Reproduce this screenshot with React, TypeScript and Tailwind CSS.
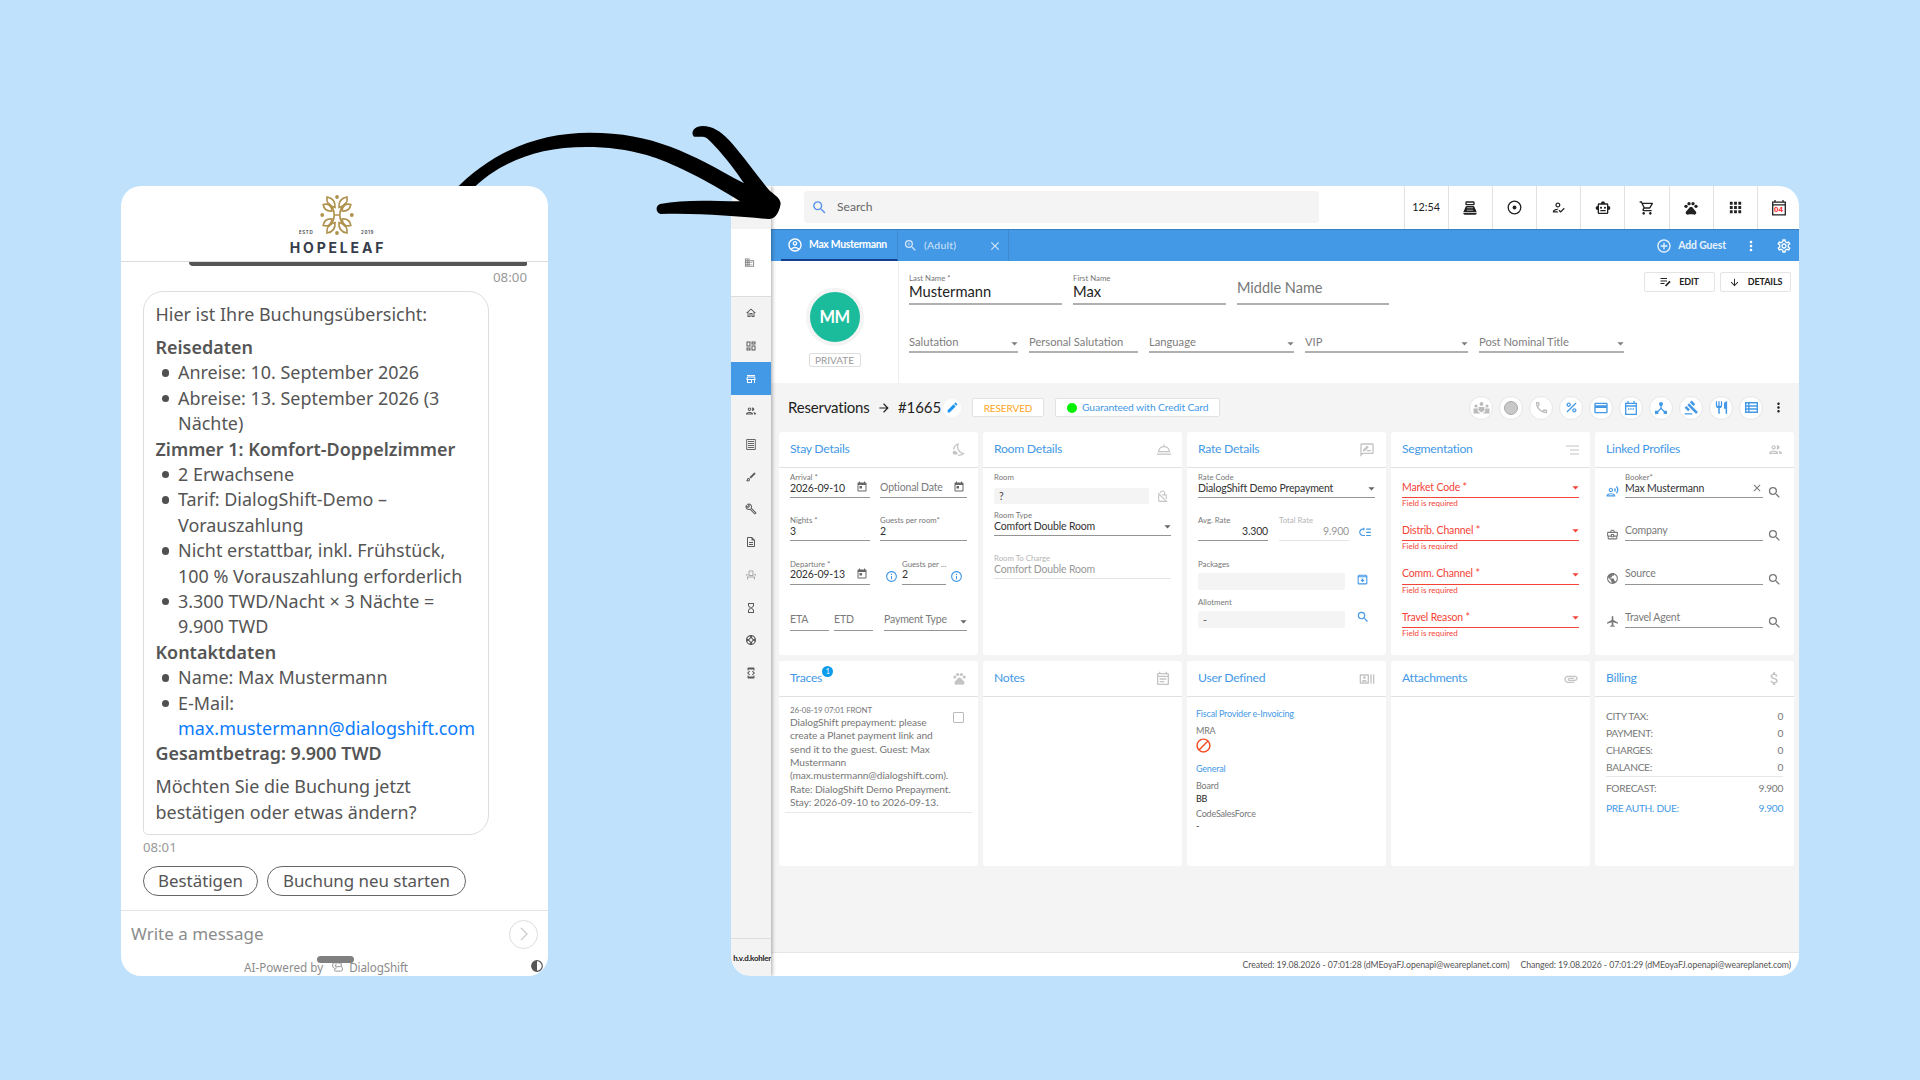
import type { ReactNode } from "react";
import type { IconType } from "react-icons";
import {
  MdAddCircleOutline,
  MdApps,
  MdArrowDownward,
  MdArrowDropDown,
  MdArrowForward,
  MdAttachMoney,
  MdAttachment,
  MdBlock,
  MdClose,
  MdDeviceHub,
  MdDomain,
  MdEdit,
  MdGavel,
  MdHourglassEmpty,
  MdLocalAirport,
  MdLowPriority,
  MdMoreVert,
  MdOutlineAccountCircle,
  MdOutlineArchive,
  MdOutlineBrush,
  MdOutlineBuild,
  MdOutlineBusinessCenter,
  MdOutlineCreditCard,
  MdOutlineDashboard,
  MdOutlineDescription,
  MdOutlineDeveloperMode,
  MdOutlineEventNote,
  MdOutlineEventSeat,
  MdOutlineHome,
  MdOutlineHowToReg,
  MdOutlineInfo,
  MdOutlineNightsStay,
  MdOutlineNoEncryption,
  MdOutlinePeople,
  MdOutlinePhone,
  MdOutlineRateReview,
  MdOutlineRecentActors,
  MdOutlineRecordVoiceOver,
  MdOutlineSettings,
  MdOutlineShoppingCart,
  MdOutlineSmartToy,
  MdOutlineStore,
  MdOutlineSupport,
  MdPercent,
  MdPets,
  MdPointOfSale,
  MdPublic,
  MdRestaurant,
  MdSearch,
  MdToday,
  MdZoomIn,
} from "react-icons/md";

/* ---------- small drawings ---------- */

function LeafLogo() {
  const quarter = (
    <g>
      <path d="M-2 -7.500C-8 -9 -11 -13 -10 -18C-4.500 -17 -1.500 -13 -2 -7.500Z" />
      <path d="M-5 -4C-10 -3.500 -13 -6 -13.800 -10.500C-9 -12 -5.500 -9.500 -5 -4Z" />
      <path d="M-2.800 0C-2.800 -5 -5 -9 -9 -12" />
    </g>
  );
  return (
    <svg width="34" height="40" viewBox="-17 -20 34 40" fill="none" stroke="#b0924f" strokeWidth="1.700">
      {quarter}
      <g transform="scale(-1 1)">{quarter}</g>
      <g transform="scale(1 -1)">{quarter}</g>
      <g transform="scale(-1 -1)">{quarter}</g>
      <path d="M-3 0H3" />
      <g fill="#b0924f" stroke="none">
        <circle cx="0" cy="-18" r="1.900" />
        <circle cx="0" cy="18" r="1.900" />
        <circle cx="-14.800" cy="0" r="1.900" />
        <circle cx="14.800" cy="0" r="1.900" />
      </g>
    </svg>
  );
}

function Arrow() {
  return (
    <svg className="absolute top-[110px] left-[440px] z-[15]" width="380" height="260" viewBox="0 0 1140 780">
      <path d="M40 244C150 128 290 68 450 68C640 68 750 130 912 220C880 170 830 110 800 84C790 77 775 82 763 80C752 74 756 48 788 48C850 50 880 105 985 238C1000 254 1020 262 1022 280C1020 300 1008 330 985 327C900 320 780 308 662 312C646 308 646 288 660 282C730 268 800 272 900 274C800 210 690 155 620 135C520 106 400 104 310 124C220 146 155 180 90 244Z" />
    </svg>
  );
}

function CalendarDay() {
  return (
    <div className="relative h-4 w-3.5">
      <svg width="14" height="16" viewBox="0 0 14 16" fill="none" stroke="#222" strokeWidth="1.300">
        <path d="M.7 2.200h12.600v12.600H.7zM.7 4.800h12.600M3 0v2.500M11 0v2.500" />
      </svg>
      <span className="absolute inset-x-0 top-[6px] text-center font-['Liberation_Sans'] text-[8px] leading-[8px] font-bold text-[#f22]">04</span>
    </div>
  );
}

function Target() {
  return (
    <svg width="15" height="15" viewBox="0 0 15 15">
      <circle cx="7.500" cy="7.500" r="6.300" fill="none" stroke="#222" strokeWidth="1.300" />
      <circle cx="7.500" cy="7.500" r="1.900" fill="#222" />
    </svg>
  );
}

function EditLines() {
  return (
    <svg width="11" height="10" viewBox="0 0 11 10" fill="none" stroke="#222">
      <path d="M.5 1.500h6.500M.5 4h6.500M.5 6.500h4" strokeWidth="1.200" />
      <path d="M5.500 9L10 4.300" strokeWidth="1.700" />
    </svg>
  );
}

function GroupPeople() {
  return (
    <svg width="17" height="12" viewBox="0 0 17 12" fill="#bbb">
      <circle cx="8.500" cy="2" r="1.900" />
      <circle cx="3" cy="4" r="1.600" />
      <circle cx="14" cy="4" r="1.600" />
      <path d="M5.500 5h6v3.500l-3 2-3-2zM.5 6.500h4.300v3l2.700 2H.5zM16.500 6.500h-4.300v3l-2.700 2h7z" />
    </svg>
  );
}

function SortLines() {
  return (
    <svg width="13" height="10" viewBox="0 0 13 10" stroke="#c4c4c4" strokeWidth="1.200">
      <path d="M0 1h13M4 5h9M4 9h9" />
    </svg>
  );
}

function RoomBell() {
  return (
    <svg width="14" height="11" viewBox="0 0 14 11" fill="none" stroke="#c4c4c4" strokeWidth="1.200">
      <path d="M0 10.200h14M1.500 7.700C2 4.500 4.300 2.700 7 2.700S12 4.500 12.500 7.700zM7 .5v2" />
    </svg>
  );
}

function CalendarRange() {
  return (
    <svg width="12" height="14" viewBox="0 0 12 14" fill="none" stroke="#4499e6" strokeWidth="1.300">
      <path d="M.7 2.300h10.600v11H.7zM.7 5h10.600M3 0v2M9 0v2" />
      <path d="M3 8h6" strokeDasharray="1.300 1" />
    </svg>
  );
}

function ViewRows() {
  return (
    <svg width="13" height="11" viewBox="0 0 13 11" fill="none" stroke="#4499e6" strokeWidth="1.400">
      <path d="M.7.7h11.600v9.600H.7zM.7 4h11.600M.7 7h11.600M3.800.7v9.600" />
    </svg>
  );
}

function ReceiptLines() {
  return (
    <svg width="10" height="11" viewBox="0 0 10 11" fill="none" stroke="#666">
      <path d="M.7.5h8.600v10H.7zM2 2.500h6M2 4.500h6M2 6.500h6M2 8.500h6" />
    </svg>
  );
}

function Contrast() {
  return (
    <svg width="12" height="12" viewBox="0 0 12 12">
      <circle cx="6" cy="6" r="5.300" fill="#fff" stroke="#555" strokeWidth="1.200" />
      <path d="M6 .7a5.300 5.300 0 0 0 0 10.600z" fill="#555" />
    </svg>
  );
}

/* ---------- chat ---------- */

function Bullet({ children }: { children: ReactNode }) {
  return (
    <li className="flex">
      <span className="mt-[9px] mr-[9px] ml-[6px] size-[7.500px] shrink-0 rounded-full bg-[#505050]" />
      <span>{children}</span>
    </li>
  );
}

function ChatPanel() {
  return (
    <section className="relative mt-[186px] ml-[121px] flex h-[790px] w-[427px] flex-col overflow-hidden rounded-[20px] bg-white font-['Noto_Sans',sans-serif] text-[#555]">
      <header className="relative flex h-[76px] shrink-0 flex-col items-center border-b border-[#dcdcdc] pt-[9px] pl-1">
        <LeafLogo />
        <div className="absolute top-[43px] left-[178px] flex w-[75px] justify-between font-['Inter'] text-[4.500px] leading-[7px] font-semibold tracking-[0.600px] text-[#3a3f4b]">
          <span>ESTD</span>
          <span>2019</span>
        </div>
        <div className="mt-[5px] pl-[3px] font-['Inter'] text-[14px] leading-[15px] font-bold tracking-[2.800px] text-[#363c49]">HOPELEAF</div>
      </header>
      <div className="ml-[68px] h-[4px] w-[338px] shrink-0 rounded-br-[6px] rounded-bl-[14px] bg-[#555]" />
      <div className="h-[25px] shrink-0 pt-[2px] pr-[21px] text-right text-[13.300px] leading-[18px] text-[#999]">08:00</div>
      <div className="ml-[22px] h-[544px] w-[346px] shrink-0 rounded-[20px] rounded-bl-[5px] border border-[#ddd] pt-[10px] pl-[11.500px] text-[17.950px] leading-[25.400px] whitespace-nowrap">
        <p className="mb-[7.500px]">Hier ist Ihre Buchungsübersicht:</p>
        <p className="font-semibold">Reisedaten</p>
        <ul>
          <Bullet>Anreise: 10. September 2026</Bullet>
          <Bullet>Abreise: 13. September 2026 (3<br />Nächte)</Bullet>
        </ul>
        <p className="font-semibold">Zimmer 1: Komfort-Doppelzimmer</p>
        <ul>
          <Bullet>2 Erwachsene</Bullet>
          <Bullet>Tarif: DialogShift-Demo –<br />Vorauszahlung</Bullet>
          <Bullet>Nicht erstattbar, inkl. Frühstück,<br />100 % Vorauszahlung erforderlich</Bullet>
          <Bullet>3.300 TWD/Nacht × 3 Nächte =<br />9.900 TWD</Bullet>
        </ul>
        <p className="font-semibold">Kontaktdaten</p>
        <ul>
          <Bullet>Name: Max Mustermann</Bullet>
          <Bullet>E-Mail:<br /><a className="text-[#0a7bff]">max.mustermann@dialogshift.com</a></Bullet>
        </ul>
        <p className="mb-[7.500px] font-semibold">Gesamtbetrag: 9.900 TWD</p>
        <p>Möchten Sie die Buchung jetzt<br />bestätigen oder etwas ändern?</p>
      </div>
      <div className="ml-[22px] h-[31px] shrink-0 pt-[3px] text-[13.200px] leading-[18px] text-[#999]">08:01</div>
      <div className="ml-[22px] flex h-[44px] shrink-0 gap-[9px] text-[16.900px]">
        <button className="h-[30px] w-[115px] rounded-full border border-[#666] leading-[28px]">Bestätigen</button>
        <button className="h-[30px] w-[199px] rounded-full border border-[#666] leading-[28px]">Buchung neu starten</button>
      </div>
      <div className="flex h-[47px] shrink-0 items-center justify-between border-t border-[#e4e4e4] pr-[10px] pl-[10px]">
        <span className="text-[17px] text-[#8c8c8c]">Write a message</span>
        <span className="flex size-[29px] items-center justify-center rounded-full border border-[#ddd]">
          <svg width="8" height="14" viewBox="0 0 8 14" fill="none" stroke="#ccc" strokeWidth="1.300"><path d="M1 1l6 6-6 6" /></svg>
        </span>
      </div>
      <footer className="flex items-center pt-[2px] pl-[123px] text-[11.700px] leading-[16px] text-[#8c8c8c]">
        <span>AI-Powered by</span>
        <svg className="mr-[5px] ml-[8px]" width="13" height="12" viewBox="0 0 14 12" fill="none" stroke="#aaa" strokeWidth="1.300">
          <path d="M3 7C0 4 2 1 5 1.500h4c3 0 3 4 0 4H6c-2 0-2-2 0-2M11 5c3 3 1 6-2 5.500H6c-3 0-3-3 0-3.500" />
        </svg>
        <span className="tracking-[-0.150px]">DialogShift</span>
      </footer>
      <span className="absolute top-[770px] left-[196px] h-[7px] w-[37px] rounded-full bg-[#808080]" />
      <span className="absolute top-[774px] left-[410px]"><Contrast /></span>
    </section>
  );
}

/* ---------- property management window ---------- */

const sideIcons: (IconType | null)[] = [
  MdOutlineHome,
  MdOutlineDashboard,
  MdOutlineStore,
  MdOutlinePeople,
  null,
  MdOutlineBrush,
  MdOutlineBuild,
  MdOutlineDescription,
  MdOutlineEventSeat,
  MdHourglassEmpty,
  MdOutlineSupport,
  MdOutlineDeveloperMode,
];

function Sidebar() {
  return (
    <aside className="z-10 flex w-[40px] shrink-0 flex-col overflow-hidden bg-[#f3f3f3] shadow-[1px_0_4px_rgba(0,0,0,0.350)]">
      <div className="h-[43px] shrink-0" />
      <div className="flex h-[68px] shrink-0 items-center justify-center border-b border-[#ddd] bg-white pr-1 text-[#888]">
        <MdDomain size={11} />
      </div>
      {sideIcons.map((Icon, i) => (
        <div
          key={i}
          className={
            i === 2
              ? "flex h-[32.700px] shrink-0 items-center justify-center bg-[#4499e6] text-white"
              : i === 8
                ? "flex h-[32.700px] shrink-0 items-center justify-center text-[#aaa]"
                : "flex h-[32.700px] shrink-0 items-center justify-center text-[#5a5a5a]"
          }
        >
          {Icon ? <Icon size={12} /> : <ReceiptLines />}
        </div>
      ))}
      <div className="mt-auto flex h-[38px] justify-end border-t border-[#ddd] pt-3 text-[8px] leading-[14px] font-bold tracking-[-0.250px] whitespace-nowrap text-[#222]">
        h.v.d.kohler
      </div>
    </aside>
  );
}

function TopBar() {
  const cell = "flex w-[44.200px] items-center justify-center border-l border-[#e2e2e2]";
  return (
    <div className="flex h-[43px] shrink-0 text-[#222]">
      <div className="mt-[5px] ml-[33px] flex h-[32px] w-[515px] items-center rounded bg-[#f4f4f4] pl-[7px] text-[12.100px] text-[#666]">
        <MdSearch size={17} className="text-[#5b93e8]" />
        <span className="ml-[9px]">Search</span>
      </div>
      <div className="ml-auto flex">
        <div className={`${cell} text-[10.800px]`}>12:54</div>
        <div className={cell}><MdPointOfSale size={16} /></div>
        <div className={cell}><Target /></div>
        <div className={cell}><MdOutlineHowToReg size={15} /></div>
        <div className={cell}><MdOutlineSmartToy size={16} /></div>
        <div className={cell}><MdOutlineShoppingCart size={16} /></div>
        <div className={cell}><MdPets size={16} /></div>
        <div className={cell}><MdApps size={17} /></div>
        <div className="flex w-[42px] items-center justify-center border-l border-[#e2e2e2]"><CalendarDay /></div>
      </div>
    </div>
  );
}

function TabBar() {
  return (
    <div className="flex h-[32px] shrink-0 items-center border-t border-[#3a7fc0] bg-[#4499e6] text-[10.400px] text-white">
      <div className="ml-[10px] flex h-full w-[117px] items-center border-r border-b-2 border-r-[#3d8ad0] border-b-[#143f8c] pt-px pl-[6px] font-bold">
        <MdOutlineAccountCircle size={16} />
        <span className="ml-[6px] tracking-[-0.300px] whitespace-nowrap">Max Mustermann</span>
      </div>
      <div className="flex h-full w-[111px] items-center border-r border-[#3d8ad0] pl-[5px] text-[#d3e5f7]">
        <MdZoomIn size={15} />
        <span className="ml-[6px] tracking-[0.300px]">(Adult)</span>
        <MdClose size={14} className="mr-[6px] ml-auto" />
      </div>
      <div className="ml-auto flex items-center text-[#e8f2fc]">
        <MdAddCircleOutline size={16} />
        <span className="ml-[6px] font-bold tracking-[-0.100px]">Add Guest</span>
        <MdMoreVert size={16} className="ml-[17px] text-white" />
        <MdOutlineSettings size={16} className="mr-[7px] ml-[17px] text-white" />
      </div>
    </div>
  );
}

function NameField({ label, value, width }: { label: string; value?: string; width: string }) {
  return (
    <div className={`flex h-[35px] flex-col border-b-2 border-[#b0b0b0] ${width}`}>
      {value ? (
        <>
          <span className="h-[11px] pt-[3px] text-[7.800px] leading-[10px] text-[#777]">{label}</span>
          <span className="text-[14.700px] leading-[21px] text-[#222]">{value}</span>
        </>
      ) : (
        <span className="pt-[8px] text-[14.500px] leading-[20px] text-[#777]">{label}</span>
      )}
    </div>
  );
}

function PickField({ label, width, pick = true }: { label: string; width: string; pick?: boolean }) {
  return (
    <div className={`flex h-[20px] items-start justify-between border-b-2 border-[#b0b0b0] text-[11.200px] leading-[17px] text-[#7d7d7d] ${width}`}>
      <span>{label}</span>
      {pick && <MdArrowDropDown size={15} className="mt-[3px] -mr-[4px]" />}
    </div>
  );
}

function GuestHeader() {
  const btn = "flex h-[20px] w-[71px] items-center justify-center gap-[8px] rounded-[2px] border border-[#e4e4e4] text-[9px] font-bold tracking-[-0.100px] text-[#222]";
  return (
    <div className="flex h-[122px] shrink-0">
      <div className="flex w-[128px] shrink-0 flex-col items-center border-r border-[#eee] pt-[27px]">
        <div className="flex size-[58px] items-center justify-center rounded-full border-4 border-[#f4f4f4] bg-[#1bbc9b] text-[16.500px] font-bold tracking-[-0.500px] text-white">MM</div>
        <div className="mt-[7px] h-[14px] w-[52px] rounded-[2px] border border-[#ddd] text-center text-[10px] leading-[12px] text-[#999]">PRIVATE</div>
      </div>
      <div className="flex flex-col pt-[9px] pl-[10px]">
        <div className="flex gap-[11px]">
          <NameField label="Last Name *" value="Mustermann" width="w-[153px]" />
          <NameField label="First Name" value="Max" width="w-[153px]" />
          <NameField label="Middle Name" width="w-[152px]" />
        </div>
        <div className="mt-[28px] flex gap-[11px]">
          <PickField label="Salutation" width="w-[109px]" />
          <PickField label="Personal Salutation" width="w-[109px]" pick={false} />
          <PickField label="Language" width="w-[145px]" />
          <PickField label="VIP" width="w-[163px]" />
          <PickField label="Post Nominal Title" width="w-[145px]" />
        </div>
      </div>
      <div className="mt-[11px] mr-[8px] ml-auto flex gap-[5px]">
        <div className={btn}><EditLines />EDIT</div>
        <div className={btn}><MdArrowDownward size={11} />DETAILS</div>
      </div>
    </div>
  );
}

function Round({ children }: { children: ReactNode }) {
  return (
    <span className="flex size-[24px] items-center justify-center rounded-full border border-[#e6e6e6] bg-white text-[#4499e6]">
      {children}
    </span>
  );
}

function ReservationBar() {
  return (
    <div className="flex h-[49px] shrink-0 items-center pl-[17px] text-[15px] text-[#222]">
      <span className="w-[83px] tracking-[-0.200px] whitespace-nowrap">Reservations</span>
      <MdArrowForward size={14} className="ml-[6px]" />
      <span className="ml-[7px] w-[42px] tracking-[-0.100px]">#1665</span>
      <span className="ml-[3px] flex size-[18px] items-center justify-center rounded-full bg-white text-[#1f97ee]"><MdEdit size={13} /></span>
      <span className="ml-[11px] h-[19px] w-[72px] rounded-[2px] border border-[#e2e2e2] bg-white text-center text-[10px] leading-[18px] tracking-[-0.100px] text-[#ffa31a]">RESERVED</span>
      <span className="ml-[11px] flex h-[19px] w-[165px] items-center rounded-[2px] border border-[#e2e2e2] bg-white pl-[11px] text-[10.300px] tracking-[-0.130px] whitespace-nowrap text-[#4499e6]">
        <span className="mr-[5px] size-[10px] rounded-full bg-[#00f000]" />
        Guaranteed with Credit Card
      </span>
      <div className="ml-auto flex items-center gap-[6px]">
        <Round><GroupPeople /></Round>
        <Round><span className="size-[14px] rounded-full border border-[#aaa] bg-[#c8c8c8]" /></Round>
        <Round><MdOutlinePhone size={15} className="text-[#bbb]" /></Round>
        <Round><MdPercent size={15} /></Round>
        <Round><MdOutlineCreditCard size={16} /></Round>
        <Round><CalendarRange /></Round>
        <Round><MdDeviceHub size={16} /></Round>
        <Round><MdGavel size={15} /></Round>
        <Round><MdRestaurant size={15} /></Round>
        <Round><ViewRows /></Round>
      </div>
      <MdMoreVert size={15} className="mr-[13px] ml-[8px]" />
    </div>
  );
}

function Card({ title, icon, badge, children }: { title: string; icon: ReactNode; badge?: string; children?: ReactNode }) {
  return (
    <div className="flex min-w-0 flex-col rounded-[3px] bg-white">
      <div className="flex h-[36px] shrink-0 items-center justify-between border-b border-[#e0e0e0] pr-[11px] pl-[11px] text-[#c4c4c4]">
        <span className="relative text-[12.200px] tracking-[-0.270px] text-[#4499e6]">
          {title}
          {badge && (
            <span className="absolute -top-[3px] -right-[11px] size-[11px] rounded-full bg-[#0b9bea] text-center text-[7px] leading-[11px] text-white">{badge}</span>
          )}
        </span>
        {icon}
      </div>
      {children}
    </div>
  );
}

type FieldProps = {
  label?: string;
  value?: string;
  width?: string;
  tone?: "normal" | "soft" | "empty";
  align?: "left" | "right";
  icon?: ReactNode;
};

/* one underlined input: floating label over the value */
function Field({ label, value, width = "w-full", tone = "normal", align = "left", icon }: FieldProps) {
  const line = tone === "soft" ? "border-[#e4e4e4]" : "border-[#949494]";
  const color = tone === "soft" ? "text-[#999]" : tone === "empty" ? "text-[#7a7a7a]" : "text-[#333]";
  return (
    <div className={`flex h-[26px] shrink-0 flex-col border-b ${line} ${width}`}>
      <span className={`h-[10px] text-[7.800px] leading-[10px] whitespace-nowrap ${tone === "soft" ? "text-[#b5b5b5]" : "text-[#777]"}`}>{label}</span>
      <div className={`flex h-[13px] items-center text-[10.500px] leading-[13px] tracking-[-0.170px] whitespace-nowrap ${color} ${align === "right" ? "justify-end" : "justify-between"}`}>
        <span className={tone === "empty" ? "-mt-[3px]" : "-mt-px"}>{value}</span>
        {icon}
      </div>
    </div>
  );
}

const caret = <MdArrowDropDown size={15} className="-mr-[4px] text-[#666]" />;
const cal = <MdToday size={12} className="-mt-[3px] mr-[2px] text-[#666]" />;

function StayCard() {
  return (
    <Card title="Stay Details" icon={<MdOutlineNightsStay size={15} />}>
      <div className="flex flex-col px-[11px] pt-[4px]">
        <div className="flex justify-between">
          <Field label="Arrival *" value="2026-09-10" width="w-[80px]" icon={cal} />
          <Field value="Optional Date" tone="empty" width="w-[87px]" icon={cal} />
        </div>
        <div className="mt-[17px] flex justify-between">
          <Field label="Nights *" value="3" width="w-[80px]" />
          <Field label="Guests per room*" value="2" width="w-[87px]" />
        </div>
        <div className="mt-[17.500px] flex">
          <Field label="Departure *" value="2026-09-13" width="w-[80px]" icon={cal} />
          <MdOutlineInfo size={13} className="mt-[11px] ml-[15px] text-[#4499e6]" />
          <Field label="Guests per ..." value="2" width="ml-[4px] w-[44px]" />
          <MdOutlineInfo size={13} className="mt-[11px] ml-[4px] text-[#4499e6]" />
        </div>
        <div className="mt-[20px] flex">
          <Field value="ETA" tone="empty" width="w-[39px]" />
          <Field value="ETD" tone="empty" width="ml-[5px] w-[39px]" />
          <Field value="Payment Type" tone="empty" width="ml-[11px] w-[83px]" icon={caret} />
        </div>
      </div>
    </Card>
  );
}

function RoomCard() {
  return (
    <Card title="Room Details" icon={<RoomBell />}>
      <div className="flex flex-col px-[11px] pt-[4px]">
        <span className="text-[7.800px] leading-[10px] text-[#777]">Room</span>
        <div className="mt-[6px] flex items-center justify-between">
          <div className="h-[16px] w-[155px] rounded-[2px] bg-[#f4f4f4] pl-[5px] text-[10.500px] leading-[16px] text-[#444]">?</div>
          <MdOutlineNoEncryption size={13} className="mr-[2px] text-[#c4c4c4]" />
        </div>
        <div className="mt-[6px]"><Field label="Room Type" value="Comfort Double Room" icon={caret} /></div>
        <div className="mt-[17px]"><Field label="Room To Charge" value="Comfort Double Room" tone="soft" /></div>
      </div>
    </Card>
  );
}

function RateCard() {
  return (
    <Card title="Rate Details" icon={<MdOutlineRateReview size={16} />}>
      <div className="flex flex-col px-[11px] pt-[4px]">
        <Field label="Rate Code" value="DialogShift Demo Prepayment" icon={caret} />
        <div className="mt-[17px] flex items-center">
          <Field label="Avg. Rate" value="3.300" width="w-[70px]" align="right" />
          <Field label="Total Rate" value="9.900" width="ml-[11px] w-[70px]" align="right" tone="soft" />
          <MdLowPriority size={14} className="mt-[7px] ml-[9px] -scale-x-100 rotate-180 text-[#4499e6]" />
        </div>
        <span className="mt-[18px] text-[7.800px] leading-[10px] text-[#777]">Packages</span>
        <div className="mt-[4px] flex items-center justify-between">
          <div className="h-[17px] w-[147px] rounded-[2px] bg-[#f4f4f4]" />
          <MdOutlineArchive size={13} className="-mt-[4px] mr-[6px] text-[#4499e6]" />
        </div>
        <span className="mt-[7px] text-[7.800px] leading-[10px] text-[#777]">Allotment</span>
        <div className="mt-[4px] flex items-center justify-between">
          <div className="h-[17px] w-[147px] rounded-[2px] bg-[#f4f4f4] pl-[5px] text-[10.700px] leading-[17px] text-[#555]">-</div>
          <MdSearch size={14} className="-mt-[5px] mr-[5px] text-[#4499e6]" />
        </div>
      </div>
    </Card>
  );
}

function SegmentationCard() {
  return (
    <Card title="Segmentation" icon={<SortLines />}>
      <div className="flex flex-col px-[11px] pt-[12px] text-[#f44336]">
        {["Market Code *", "Distrib. Channel *", "Comm. Channel *", "Travel Reason *"].map((label) => (
          <div key={label} className="h-[43.400px]">
            <div className="flex h-[18px] items-center justify-between border-b border-[#f44336] pb-[2px] text-[10.500px] tracking-[-0.170px]">
              <span>{label}</span>
              <MdArrowDropDown size={15} className="-mr-[4px]" />
            </div>
            <p className="text-[8px] leading-[10px]">Field is required</p>
          </div>
        ))}
      </div>
    </Card>
  );
}

function LinkedCard() {
  const rows: { icon: IconType; value: string }[] = [
    { icon: MdOutlineRecordVoiceOver, value: "Max Mustermann" },
    { icon: MdOutlineBusinessCenter, value: "Company" },
    { icon: MdPublic, value: "Source" },
    { icon: MdLocalAirport, value: "Travel Agent" },
  ];
  return (
    <Card title="Linked Profiles" icon={<MdOutlinePeople size={15} />}>
      <div className="flex flex-col pt-[4px] pl-[11px]">
        {rows.map(({ icon: Icon, value }, i) => (
          <div key={value} className="flex h-[43.400px] items-start">
            <Icon size={13} className={i === 0 ? "mt-[13px] text-[#4499e6]" : "mt-[13px] text-[#777]"} />
            {i === 0 ? (
              <Field label="Booker*" value={value} width="ml-[6px] w-[138px]" icon={<MdClose size={12} className="-mt-[2px] text-[#777]" />} />
            ) : (
              <Field value={value} tone="empty" width="ml-[6px] w-[138px]" />
            )}
            <MdSearch size={15} className="mt-[13px] ml-[4px] text-[#777]" />
          </div>
        ))}
      </div>
    </Card>
  );
}

function TracesCard() {
  return (
    <Card title="Traces" badge="1" icon={<MdPets size={15} />}>
      <div className="mx-[6px] flex h-[116px] justify-between border-b border-[#e8e8e8] pt-[8px] pl-[5px] text-[#777]">
        <div className="whitespace-nowrap">
          <p className="text-[7.900px] leading-[11px] tracking-[-0.100px]">26-08-19 07:01 FRONT</p>
          <p className="text-[10.200px] leading-[13.350px] tracking-[-0.080px]">
            DialogShift prepayment: please<br />create a Planet payment link and<br />send it to the guest. Guest: Max<br />Mustermann<br />
            (max.mustermann@dialogshift.com).<br />Rate: DialogShift Demo Prepayment.<br />Stay: 2026-09-10 to 2026-09-13.
          </p>
        </div>
        <span className="mt-[7px] mr-[8px] size-[11px] shrink-0 rounded-[1px] border border-[#bbb]" />
      </div>
    </Card>
  );
}

function UserDefinedCard() {
  return (
    <Card title="User Defined" icon={<MdOutlineRecentActors size={16} />}>
      <div className="flex flex-col pt-[11px] pl-[9px] text-[9px] leading-[12px] tracking-[-0.200px] text-[#777]">
        <span className="text-[#4499e6]">Fiscal Provider e-Invoicing</span>
        <span className="mt-[5px]">MRA</span>
        <MdBlock size={17} className="-ml-px text-[#f4481e]" />
        <span className="mt-[9px] text-[#4499e6]">General</span>
        <span className="mt-[5px]">Board</span>
        <span className="mt-px text-[#222]">BB</span>
        <span className="mt-[3px]">CodeSalesForce</span>
        <span className="text-[#333]">-</span>
      </div>
    </Card>
  );
}

function BillingRow({ label, value }: { label: string; value: string }) {
  return (
    <div className="flex h-[17px] items-center justify-between">
      <span>{label}</span>
      <span>{value}</span>
    </div>
  );
}

function BillingCard() {
  return (
    <Card title="Billing" icon={<MdAttachMoney size={17} />}>
      <div className="px-[11px] pt-[11px] text-[10.200px] tracking-[-0.330px] text-[#777]">
        <BillingRow label="CITY TAX:" value="0" />
        <BillingRow label="PAYMENT:" value="0" />
        <BillingRow label="CHARGES:" value="0" />
        <BillingRow label="BALANCE:" value="0" />
        <div className="border-t border-[#e8e8e8] pt-[3px]"><BillingRow label="FORECAST:" value="9.900" /></div>
        <div className="pt-[3px] text-[#4499e6]"><BillingRow label="PRE AUTH. DUE:" value="9.900" /></div>
      </div>
    </Card>
  );
}

function PmsWindow() {
  return (
    <section className="mt-[186px] ml-[183px] flex h-[790px] w-[1068px] overflow-hidden rounded-[20px] bg-white font-['Lato',sans-serif]">
      <Sidebar />
      <main className="flex min-w-0 flex-1 flex-col">
        <TopBar />
        <TabBar />
        <GuestHeader />
        <div className="flex flex-1 flex-col bg-[#f4f4f4]">
          <ReservationBar />
          <div className="grid grid-cols-5 grid-rows-[223px_205px] gap-x-[5px] gap-y-[6px] pr-[5px] pl-[8px]">
            <StayCard />
            <RoomCard />
            <RateCard />
            <SegmentationCard />
            <LinkedCard />
            <TracesCard />
            <Card title="Notes" icon={<MdOutlineEventNote size={16} />} />
            <UserDefinedCard />
            <Card title="Attachments" icon={<MdAttachment size={16} />} />
            <BillingCard />
          </div>
        </div>
        <footer className="flex h-[24px] shrink-0 items-center justify-end gap-[11px] border-t border-[#e6e6e6] pr-[8px] text-[8.700px] tracking-[-0.070px] text-[#555]">
          <span>Created: 19.08.2026 - 07:01:28 (dMEoyaFJ.openapi@weareplanet.com)</span>
          <span>Changed: 19.08.2026 - 07:01:29 (dMEoyaFJ.openapi@weareplanet.com)</span>
        </footer>
      </main>
    </section>
  );
}

/* the arrow lies over the window but starts behind the chat */
function App() {
  return (
    <div className="relative flex h-[1080px] w-[1920px] items-start overflow-hidden bg-[#bfe1fb]">
      <div className="z-20"><ChatPanel /></div>
      <PmsWindow />
      <Arrow />
    </div>
  );
}

export default App;
